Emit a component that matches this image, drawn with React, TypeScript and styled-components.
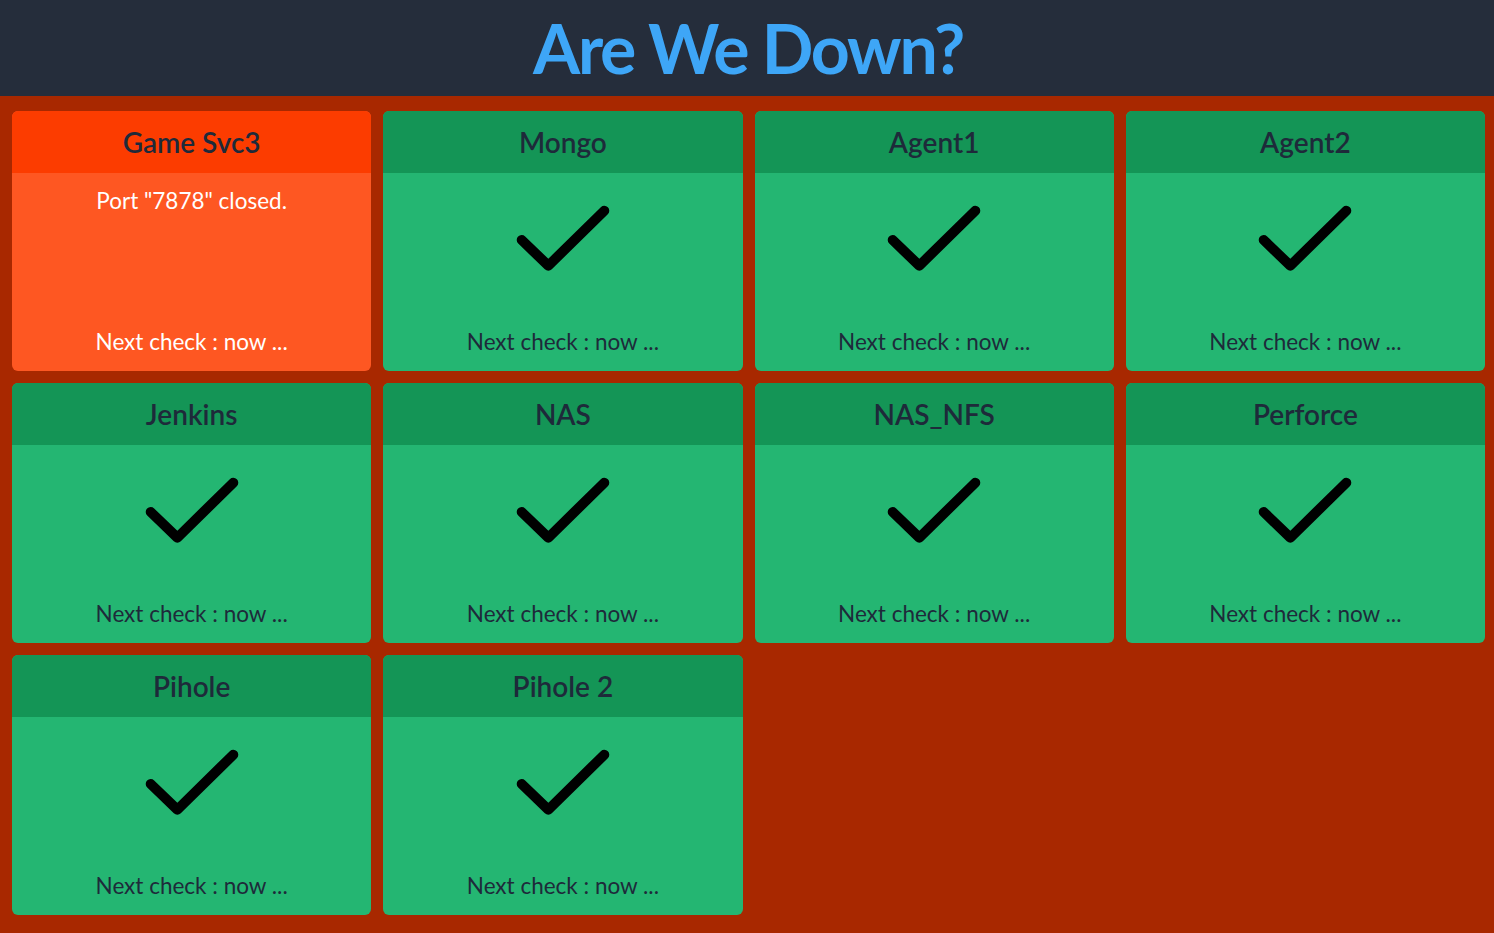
import React, { FC } from 'react';
import styled, { createGlobalStyle } from 'styled-components';

const GlobalStyle = createGlobalStyle`
  html, body {
    margin: 0;
    padding: 0;
    background: #a82800;
  }
  body {
    font-family: Lato, "Open Sans", sans-serif;
  }
`;

const StyledPage = styled.div`
  display: flex;
  flex-direction: column;
  min-height: 100vh;
  background: #a82800;
`;
const StyledHeader = styled.header`
  align-items: center;
  background: #252d3b;
  display: flex;
  height: 96px;
  justify-content: center;
`;
const StyledTitle = styled.h1`
  color: #3ea6f7;
  font-family: Lato, sans-serif;
  font-size: 68px;
  font-weight: 700;
  letter-spacing: -2.2px;
  line-height: 96px;
  margin: 0;
  padding-left: 2px;
`;
const StyledGrid = styled.main`
  display: grid;
  gap: 12px;
  grid-template-columns: repeat(4, 1fr);
  padding: 15px 9px 18px 12px;
`;

type Status = 'up' | 'down';

const palette = {
  up: { head: '#149556', body: '#24b672', text: '#1e2a3a' },
  down: { head: '#fc3c00', body: '#fe5722', text: '#ffffff' },
};

const StyledCard = styled.section<{ $status: Status }>`
  background: ${({ $status }) => palette[$status].body};
  border-radius: 6px;
  display: flex;
  flex-direction: column;
  height: 260px;
  overflow: hidden;
`;
const StyledCardHead = styled.div<{ $status: Status }>`
  align-items: center;
  background: ${({ $status }) => palette[$status].head};
  color: #1e2a3a;
  display: flex;
  font-size: 28px;
  font-weight: 600;
  height: 62px;
  justify-content: center;
`;
const StyledCardBody = styled.div<{ $status: Status }>`
  color: ${({ $status }) => palette[$status].text};
  display: flex;
  flex: 1;
  flex-direction: column;
  align-items: center;
  justify-content: space-between;
  font-size: 22.5px;
  line-height: 30px;
  padding: 13px 0 14px;
`;
const StyledMessage = styled.div`
  text-align: center;
`;
const StyledCheck = styled.svg`
  display: block;
  margin-top: 14px;
`;
const StyledNext = styled.div`
  text-align: center;
`;

const Check: FC = () => (
  <StyledCheck width="100" height="76" viewBox="0 0 100 76">
    <polyline
      points="8.7,40 35.3,65.7 91.3,10.7"
      fill="none"
      stroke="#000"
      strokeWidth="10"
      strokeLinecap="round"
      strokeLinejoin="round"
    />
  </StyledCheck>
);

type Service = { name: string; status: Status; message?: string };

const services: Service[] = [
  { name: 'Game Svc3', status: 'down', message: 'Port "7878" closed.' },
  { name: 'Mongo', status: 'up' },
  { name: 'Agent1', status: 'up' },
  { name: 'Agent2', status: 'up' },
  { name: 'Jenkins', status: 'up' },
  { name: 'NAS', status: 'up' },
  { name: 'NAS_NFS', status: 'up' },
  { name: 'Perforce', status: 'up' },
  { name: 'Pihole', status: 'up' },
  { name: 'Pihole 2', status: 'up' },
];

const ServiceCard: FC<Service> = ({ name, status, message }) => (
  <StyledCard $status={status}>
    <StyledCardHead $status={status}>{name}</StyledCardHead>
    <StyledCardBody $status={status}>
      {status === 'down' ? <StyledMessage>{message}</StyledMessage> : <Check />}
      <StyledNext>Next check : now ...</StyledNext>
    </StyledCardBody>
  </StyledCard>
);

const App: FC = () => (
  <StyledPage>
    <GlobalStyle />
    <StyledHeader>
      <StyledTitle>Are We Down?</StyledTitle>
    </StyledHeader>
    <StyledGrid>
      {services.map((s) => (
        <ServiceCard key={s.name} {...s} />
      ))}
    </StyledGrid>
  </StyledPage>
);

export default App;
